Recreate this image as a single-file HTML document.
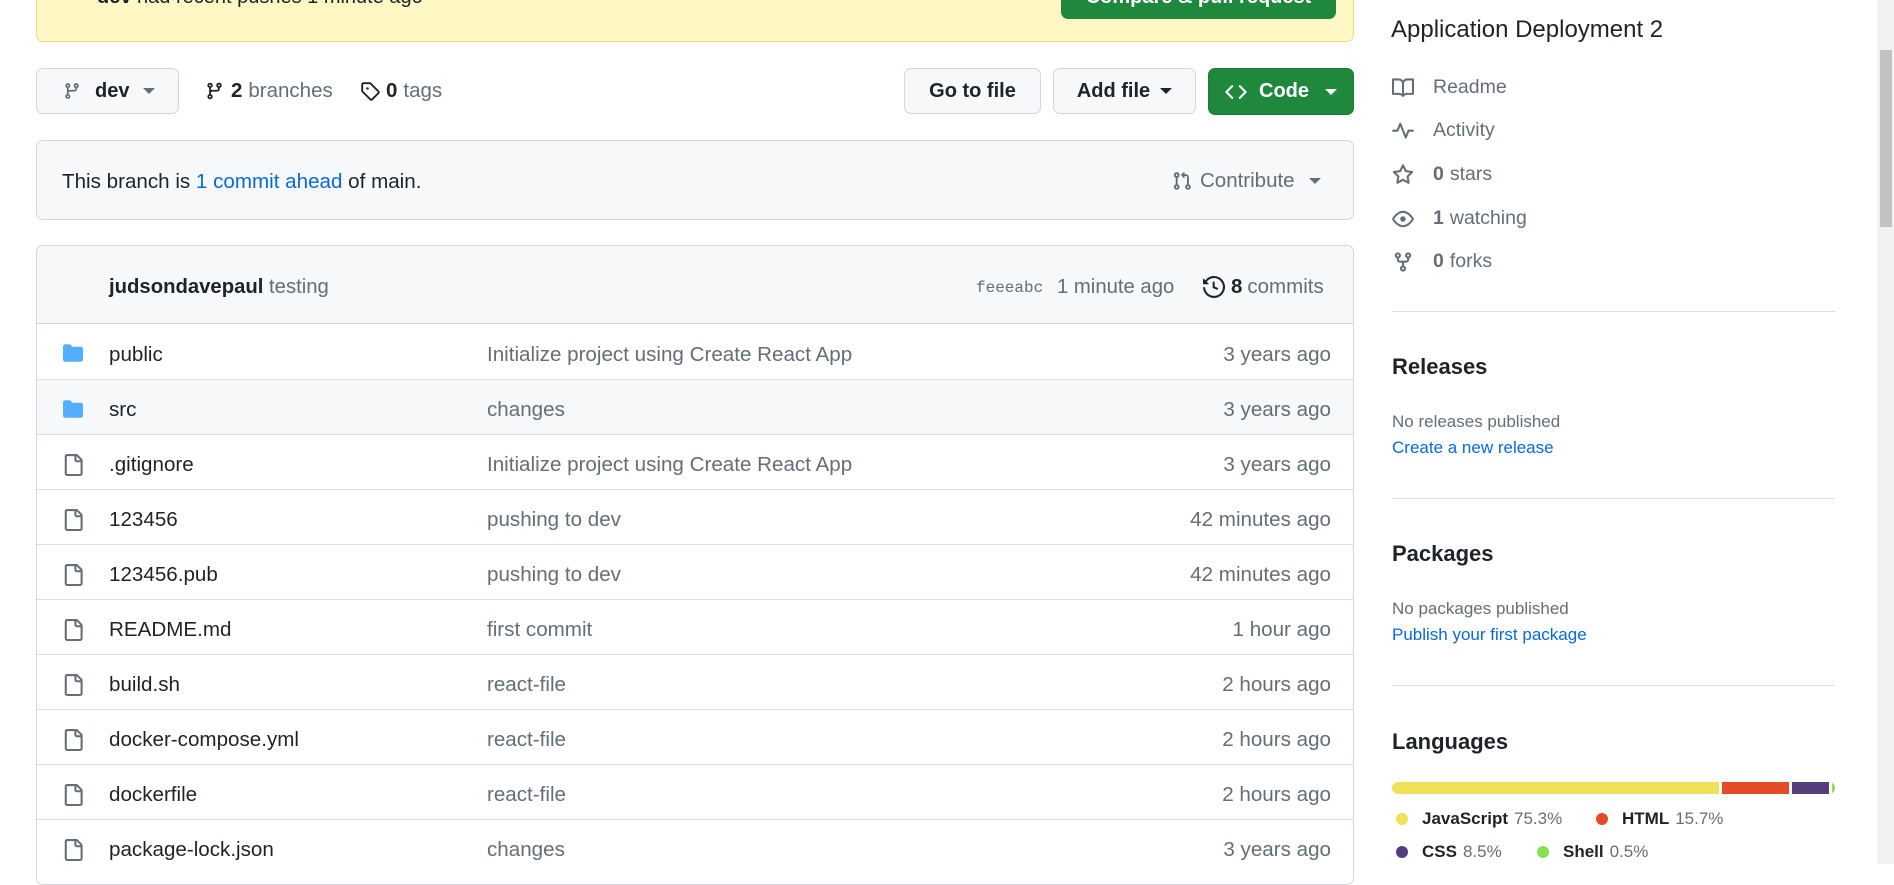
<!DOCTYPE html>
<html><head><meta charset="utf-8"><style>
*{box-sizing:border-box;margin:0;padding:0}
body{width:1894px;height:864px;overflow:hidden;background:#fff;font-family:"Liberation Sans",sans-serif;color:#1f2328;position:relative}
.a{position:absolute}
.btn{position:absolute;border:1px solid #d0d7de;background:#f6f8fa;border-radius:7px;display:flex;align-items:center;justify-content:center;font-size:20px;font-weight:bold;color:#1f2328}
.caret{display:inline-block;width:0;height:0;border-left:6px solid transparent;border-right:6px solid transparent;border-top:6px solid currentColor;margin-left:10px}
.row{position:absolute;left:37px;width:1316px;height:55px;border-top:1px solid #d8dee4;font-size:20.6px}
.row span{position:absolute;top:50%;transform:translateY(-50%);margin-top:3px}
.row .n{left:72px;color:#1f2328}.row .m{left:450px;color:#656d76}.row .t{right:22px;color:#656d76}
.row svg{position:absolute;left:24px;top:19px}
.side{position:absolute;left:1392px;font-size:19.5px;color:#656d76;display:flex;align-items:center}
.side svg{margin-right:19px}
.side b{color:#656d76;margin-right:6px}
.hr{position:absolute;left:1392px;width:443px;height:1px;background:#d8dee4}
h2{position:absolute;left:1392px;font-size:22px;font-weight:bold;color:#1f2328}
.sm{position:absolute;left:1392px;font-size:17px;color:#656d76}
.lnk{color:#0969da}
.lg{position:absolute;font-size:17px;color:#656d76;display:flex;align-items:center}
.lg i{display:inline-block;width:12px;height:12px;border-radius:50%;margin-right:14px}
.lg b{color:#1f2328;margin-right:6px}
</style></head><body>
<div class="a" style="left:36px;top:-10px;width:1318px;height:52px;background:#fff8c5;border:1px solid #eed888;border-radius:7px"></div>
<div class="a" style="left:97px;top:-14px;font-size:20px;color:#1f2328"><b>dev</b> had recent pushes 1 minute ago</div>
<div class="a" style="left:1061px;top:-20px;width:275px;height:39px;background:#1f883d;border-radius:7px;color:#fff;font-weight:bold;font-size:20px;text-align:center;line-height:34px">Compare &amp; pull request</div>

<div class="btn" style="left:36px;top:68px;width:143px;height:46px;justify-content:flex-start;padding-left:26px">
<svg width="18" height="22" viewBox="0 0 16 16" fill="#656d76"><path d="M9.5 3.25a2.25 2.25 0 1 1 3 2.122V6A2.5 2.5 0 0 1 10 8.5H6a1 1 0 0 0-1 1v1.128a2.251 2.251 0 1 1-1.5 0V5.372a2.25 2.25 0 1 1 1.5 0v1.836A2.493 2.493 0 0 1 6 7h4a1 1 0 0 0 1-1v-.628A2.25 2.25 0 0 1 9.5 3.25Zm-6 0a.75.75 0 1 0 1.5 0 .75.75 0 0 0-1.5 0Zm8.25-.75a.75.75 0 1 0 0 1.5.75.75 0 0 0 0-1.5ZM4.25 12a.75.75 0 1 0 0 1.5.75.75 0 0 0 0-1.5Z"/></svg>
<span style="margin-left:14px">dev</span><span class="caret" style="color:#656d76;margin-left:14px"></span></div>
<div class="a" style="left:205px;top:79px;font-size:20.5px;color:#656d76;display:flex;align-items:center"><svg width="19" height="22" viewBox="0 0 16 16" fill="#1f2328"><path d="M9.5 3.25a2.25 2.25 0 1 1 3 2.122V6A2.5 2.5 0 0 1 10 8.5H6a1 1 0 0 0-1 1v1.128a2.251 2.251 0 1 1-1.5 0V5.372a2.25 2.25 0 1 1 1.5 0v1.836A2.493 2.493 0 0 1 6 7h4a1 1 0 0 0 1-1v-.628A2.25 2.25 0 0 1 9.5 3.25Zm-6 0a.75.75 0 1 0 1.5 0 .75.75 0 0 0-1.5 0Zm8.25-.75a.75.75 0 1 0 0 1.5.75.75 0 0 0 0-1.5ZM4.25 12a.75.75 0 1 0 0 1.5.75.75 0 0 0 0-1.5Z"/></svg><b style="color:#1f2328;margin:0 6px 0 7px">2</b>branches</div>
<div class="a" style="left:360px;top:79px;font-size:20.5px;color:#656d76;display:flex;align-items:center"><svg width="20" height="22" viewBox="0 0 16 16" fill="#1f2328"><path d="M1 7.775V2.75C1 1.784 1.784 1 2.75 1h5.025c.464 0 .91.184 1.238.513l6.25 6.25a1.75 1.75 0 0 1 0 2.474l-5.026 5.026a1.75 1.75 0 0 1-2.474 0l-6.25-6.25A1.752 1.752 0 0 1 1 7.775Zm1.5 0c0 .066.026.13.073.177l6.25 6.250a.25.25 0 0 0 .354 0l5.025-5.025a.25.25 0 0 0 0-.354l-6.25-6.25a.25.25 0 0 0-.177-.073H2.75a.25.25 0 0 0-.25.25ZM6 5a1 1 0 1 1 0 2 1 1 0 0 1 0-2Z"/></svg><b style="color:#1f2328;margin:0 6px 0 6px">0</b>tags</div>

<div class="btn" style="left:904px;top:68px;width:137px;height:46px">Go to file</div>
<div class="btn" style="left:1053px;top:68px;width:143px;height:46px">Add file<span class="caret"></span></div>
<div class="btn" style="left:1208px;top:68px;width:146px;height:47px;background:#1f883d;border-color:#1a7f37;color:#fff">
<svg width="22" height="22" viewBox="0 0 16 16" fill="#fff"><path d="m11.28 3.22 4.25 4.25a.75.75 0 0 1 0 1.06l-4.25 4.25a.749.749 0 0 1-1.275-.326.749.749 0 0 1 .215-.734L13.940 8l-3.72-3.72a.749.749 0 0 1 .326-1.275.749.749 0 0 1 .734.215Zm-6.56 0a.751.751 0 0 1 1.042.018.751.751 0 0 1 .018 1.042L2.06 8l3.72 3.72a.749.749 0 0 1-.326 1.275.749.749 0 0 1-.734-.215L.47 8.53a.75.75 0 0 1 0-1.06Z"/></svg><span style="margin-left:12px">Code</span><span class="caret" style="margin-left:16px"></span></div>

<div class="a" style="left:36px;top:140px;width:1318px;height:80px;background:#f6f8fa;border:1px solid #d0d7de;border-radius:7px"></div>
<div class="a" style="left:62px;top:170px;font-size:20.6px">This branch is <span class="lnk">1 commit ahead</span> of main.</div>
<div class="a" style="left:1172px;top:169px;font-size:20.5px;color:#656d76;display:flex;align-items:center"><svg width="20" height="22" viewBox="0 0 16 16" fill="#656d76"><path d="M1.5 3.25a2.25 2.25 0 1 1 3 2.122v5.256a2.251 2.251 0 1 1-1.5 0V5.372A2.25 2.25 0 0 1 1.5 3.25Zm5.677-.177L9.573.677A.25.25 0 0 1 10 .854V2.5h1A2.5 2.5 0 0 1 13.5 5v5.628a2.251 2.251 0 1 1-1.5 0V5a1 1 0 0 0-1-1h-1v1.646a.25.25 0 0 1-.427.177L7.177 3.427a.25.25 0 0 1 0-.354ZM3.75 2.5a.75.75 0 1 0 0 1.5.75.75 0 0 0 0-1.5Zm0 9.5a.75.75 0 1 0 0 1.5.75.75 0 0 0 0-1.5Zm8.25.75a.75.75 0 1 0 1.5 0 .75.75 0 0 0-1.5 0Z"/></svg><span style="margin-left:8px">Contribute</span><span class="caret" style="margin-left:14px"></span></div>

<div class="a" style="left:36px;top:245px;width:1318px;height:640px;border:1px solid #d0d7de;border-radius:7px"></div>
<div class="a" style="left:37px;top:246px;width:1316px;height:78px;background:#f6f8fa;border-radius:7px 7px 0 0;border-bottom:1px solid #d0d7de"></div>
<div class="a" style="left:109px;top:276px;font-size:20.3px"><b>judsondavepaul</b> <span style="color:#656d76">testing</span></div>
<div class="a" style="left:976px;top:279px;font-size:16px;color:#656d76;font-family:'Liberation Mono',monospace">feeeabc</div>
<div class="a" style="left:1057px;top:276px;font-size:20.3px;color:#656d76">1 minute ago</div>
<div class="a" style="left:1203px;top:275px;font-size:20.5px;color:#656d76;display:flex;align-items:center"><svg width="22" height="22" viewBox="0 0 16 16" fill="#1f2328"><path d="m.427 1.927 1.215 1.215a8.002 8.002 0 1 1-1.6 5.685.75.75 0 1 1 1.493-.154 6.5 6.5 0 1 0 1.18-4.458l1.358 1.358A.25.25 0 0 1 3.896 6H.25A.25.25 0 0 1 0 5.75V2.104a.25.25 0 0 1 .427-.177ZM7.75 4a.75.75 0 0 1 .75.75v2.992l2.028.812a.75.75 0 0 1-.557 1.392l-2.5-1A.751.751 0 0 1 7 8.25v-3.5A.75.75 0 0 1 7.75 4Z"/></svg><b style="color:#1f2328;margin:0 5px 0 6px">8</b>commits</div>

<div class="row" style="top:324px;border-top:none"><svg width="24" height="20" viewBox="0 0 16 16" fill="#54aeff"><path d="M1.75 1A1.75 1.75 0 0 0 0 2.75v10.5C0 14.216.784 15 1.75 15h12.5A1.75 1.75 0 0 0 16 13.25v-8.5A1.75 1.75 0 0 0 14.25 3H7.5a.25.25 0 0 1-.2-.1l-.9-1.2C6.07 1.26 5.55 1 5 1H1.75Z"/></svg><span class="n">public</span><span class="m">Initialize project using Create React App</span><span class="t">3 years ago</span></div>
<div class="row" style="top:379px;background:#f6f8fa"><svg width="24" height="20" viewBox="0 0 16 16" fill="#54aeff"><path d="M1.75 1A1.75 1.75 0 0 0 0 2.75v10.5C0 14.216.784 15 1.75 15h12.5A1.75 1.75 0 0 0 16 13.25v-8.5A1.75 1.75 0 0 0 14.25 3H7.5a.25.25 0 0 1-.2-.1l-.9-1.2C6.07 1.26 5.55 1 5 1H1.75Z"/></svg><span class="n">src</span><span class="m">changes</span><span class="t">3 years ago</span></div>
<div class="row" style="top:434px"><svg width="24" height="22" viewBox="0 0 16 16" fill="#656d76"><path d="M2 1.75C2 .784 2.784 0 3.75 0h6.586c.464 0 .909.184 1.237.513l2.914 2.914c.329.328.513.773.513 1.237v9.586A1.75 1.75 0 0 1 13.25 16h-9.5A1.75 1.75 0 0 1 2 14.25Zm1.75-.25a.25.25 0 0 0-.25.25v12.5c0 .138.112.25.25.25h9.5a.25.25 0 0 0 .25-.25V6h-2.75A1.75 1.75 0 0 1 9 4.25V1.5Zm6.75.062V4.25c0 .138.112.25.25.25h2.688l-.011-.013-2.914-2.914-.013-.011Z"/></svg><span class="n">.gitignore</span><span class="m">Initialize project using Create React App</span><span class="t">3 years ago</span></div>
<div class="row" style="top:489px"><svg width="24" height="22" viewBox="0 0 16 16" fill="#656d76"><path d="M2 1.75C2 .784 2.784 0 3.75 0h6.586c.464 0 .909.184 1.237.513l2.914 2.914c.329.328.513.773.513 1.237v9.586A1.75 1.75 0 0 1 13.25 16h-9.5A1.75 1.75 0 0 1 2 14.25Zm1.75-.25a.25.25 0 0 0-.25.25v12.5c0 .138.112.25.25.25h9.5a.25.25 0 0 0 .25-.25V6h-2.75A1.75 1.75 0 0 1 9 4.25V1.5Zm6.75.062V4.25c0 .138.112.25.25.25h2.688l-.011-.013-2.914-2.914-.013-.011Z"/></svg><span class="n">123456</span><span class="m">pushing to dev</span><span class="t">42 minutes ago</span></div>
<div class="row" style="top:544px"><svg width="24" height="22" viewBox="0 0 16 16" fill="#656d76"><path d="M2 1.75C2 .784 2.784 0 3.75 0h6.586c.464 0 .909.184 1.237.513l2.914 2.914c.329.328.513.773.513 1.237v9.586A1.75 1.75 0 0 1 13.25 16h-9.5A1.75 1.75 0 0 1 2 14.25Zm1.75-.25a.25.25 0 0 0-.25.25v12.5c0 .138.112.25.25.25h9.5a.25.25 0 0 0 .25-.25V6h-2.75A1.75 1.75 0 0 1 9 4.25V1.5Zm6.75.062V4.25c0 .138.112.25.25.25h2.688l-.011-.013-2.914-2.914-.013-.011Z"/></svg><span class="n">123456.pub</span><span class="m">pushing to dev</span><span class="t">42 minutes ago</span></div>
<div class="row" style="top:599px"><svg width="24" height="22" viewBox="0 0 16 16" fill="#656d76"><path d="M2 1.75C2 .784 2.784 0 3.75 0h6.586c.464 0 .909.184 1.237.513l2.914 2.914c.329.328.513.773.513 1.237v9.586A1.75 1.75 0 0 1 13.25 16h-9.5A1.75 1.75 0 0 1 2 14.25Zm1.75-.25a.25.25 0 0 0-.25.25v12.5c0 .138.112.25.25.25h9.5a.25.25 0 0 0 .25-.25V6h-2.75A1.75 1.75 0 0 1 9 4.25V1.5Zm6.75.062V4.25c0 .138.112.25.25.25h2.688l-.011-.013-2.914-2.914-.013-.011Z"/></svg><span class="n">README.md</span><span class="m">first commit</span><span class="t">1 hour ago</span></div>
<div class="row" style="top:654px"><svg width="24" height="22" viewBox="0 0 16 16" fill="#656d76"><path d="M2 1.75C2 .784 2.784 0 3.75 0h6.586c.464 0 .909.184 1.237.513l2.914 2.914c.329.328.513.773.513 1.237v9.586A1.75 1.75 0 0 1 13.25 16h-9.5A1.75 1.75 0 0 1 2 14.25Zm1.75-.25a.25.25 0 0 0-.25.25v12.5c0 .138.112.25.25.25h9.5a.25.25 0 0 0 .25-.25V6h-2.75A1.75 1.75 0 0 1 9 4.25V1.5Zm6.75.062V4.25c0 .138.112.25.25.25h2.688l-.011-.013-2.914-2.914-.013-.011Z"/></svg><span class="n">build.sh</span><span class="m">react-file</span><span class="t">2 hours ago</span></div>
<div class="row" style="top:709px"><svg width="24" height="22" viewBox="0 0 16 16" fill="#656d76"><path d="M2 1.75C2 .784 2.784 0 3.75 0h6.586c.464 0 .909.184 1.237.513l2.914 2.914c.329.328.513.773.513 1.237v9.586A1.75 1.75 0 0 1 13.25 16h-9.5A1.75 1.75 0 0 1 2 14.25Zm1.75-.25a.25.25 0 0 0-.25.25v12.5c0 .138.112.25.25.25h9.5a.25.25 0 0 0 .25-.25V6h-2.75A1.75 1.75 0 0 1 9 4.25V1.5Zm6.75.062V4.25c0 .138.112.25.25.25h2.688l-.011-.013-2.914-2.914-.013-.011Z"/></svg><span class="n">docker-compose.yml</span><span class="m">react-file</span><span class="t">2 hours ago</span></div>
<div class="row" style="top:764px"><svg width="24" height="22" viewBox="0 0 16 16" fill="#656d76"><path d="M2 1.75C2 .784 2.784 0 3.75 0h6.586c.464 0 .909.184 1.237.513l2.914 2.914c.329.328.513.773.513 1.237v9.586A1.75 1.75 0 0 1 13.25 16h-9.5A1.75 1.75 0 0 1 2 14.25Zm1.75-.25a.25.25 0 0 0-.25.25v12.5c0 .138.112.25.25.25h9.5a.25.25 0 0 0 .25-.25V6h-2.75A1.75 1.75 0 0 1 9 4.25V1.5Zm6.75.062V4.25c0 .138.112.25.25.25h2.688l-.011-.013-2.914-2.914-.013-.011Z"/></svg><span class="n">dockerfile</span><span class="m">react-file</span><span class="t">2 hours ago</span></div>
<div class="row" style="top:819px"><svg width="24" height="22" viewBox="0 0 16 16" fill="#656d76"><path d="M2 1.75C2 .784 2.784 0 3.75 0h6.586c.464 0 .909.184 1.237.513l2.914 2.914c.329.328.513.773.513 1.237v9.586A1.75 1.75 0 0 1 13.25 16h-9.5A1.75 1.75 0 0 1 2 14.25Zm1.75-.25a.25.25 0 0 0-.25.25v12.5c0 .138.112.25.25.25h9.5a.25.25 0 0 0 .25-.25V6h-2.75A1.75 1.75 0 0 1 9 4.25V1.5Zm6.75.062V4.25c0 .138.112.25.25.25h2.688l-.011-.013-2.914-2.914-.013-.011Z"/></svg><span class="n">package-lock.json</span><span class="m">changes</span><span class="t">3 years ago</span></div>

<div class="a" style="left:1391px;top:16px;font-size:24px;color:#1f2328">Application Deployment 2</div>
<div class="side" style="top:76px"><svg width="22" height="22" viewBox="0 0 16 16" fill="#656d76"><path d="M0 1.75A.75.75 0 0 1 .75 1h4.253c1.227 0 2.317.59 3 1.501A3.743 3.743 0 0 1 11.006 1h4.245a.75.75 0 0 1 .75.75v10.5a.75.75 0 0 1-.75.75h-4.507a2.25 2.25 0 0 0-1.591.659l-.622.621a.75.75 0 0 1-1.06 0l-.622-.621A2.25 2.25 0 0 0 5.258 13H.75a.75.75 0 0 1-.75-.75Zm7.251 10.324.004-5.073-.002-2.253A2.25 2.25 0 0 0 5.003 2.5H1.5v9h3.757a3.75 3.75 0 0 1 1.994.574ZM8.755 4.75l-.004 7.322a3.752 3.752 0 0 1 1.992-.572H14.5v-9h-3.495a2.25 2.25 0 0 0-2.25 2.25Z"/></svg>Readme</div>
<div class="side" style="top:119px"><svg width="22" height="22" viewBox="0 0 16 16" fill="#656d76"><path d="M6 2c.306 0 .582.187.696.471L10 10.731l1.304-3.26A.751.751 0 0 1 12 7h3.25a.75.75 0 0 1 0 1.5h-2.742l-1.812 4.528a.751.751 0 0 1-1.392 0L6 4.77 4.696 8.03A.75.75 0 0 1 4 8.5H.75a.75.75 0 0 1 0-1.5h2.742l1.812-4.529A.751.751 0 0 1 6 2Z"/></svg>Activity</div>
<div class="side" style="top:163px"><svg width="22" height="22" viewBox="0 0 16 16" fill="#656d76"><path d="M8 .25a.75.75 0 0 1 .673.418l1.882 3.815 4.21.612a.75.75 0 0 1 .416 1.279l-3.046 2.970.719 4.192a.751.751 0 0 1-1.088.791L8 12.347l-3.766 1.98a.75.75 0 0 1-1.088-.79l.72-4.194L.818 6.374a.75.75 0 0 1 .416-1.28l4.21-.611L7.327.668A.75.75 0 0 1 8 .25Zm0 2.445L6.615 5.5a.75.75 0 0 1-.564.41l-3.097.45 2.24 2.184a.75.75 0 0 1 .216.664l-.528 3.084 2.769-1.456a.75.75 0 0 1 .698 0l2.77 1.456-.53-3.084a.75.75 0 0 1 .216-.664l2.24-2.183-3.096-.45a.75.75 0 0 1-.564-.41L8 2.694Z"/></svg><b>0</b>stars</div>
<div class="side" style="top:207px"><svg width="22" height="22" viewBox="0 0 16 16" fill="#656d76"><path d="M8 2c1.981 0 3.671.992 4.933 2.078 1.27 1.091 2.187 2.345 2.637 3.023a1.62 1.62 0 0 1 0 1.798c-.45.678-1.367 1.932-2.637 3.023C11.67 13.008 9.981 14 8 14c-1.981 0-3.671-.992-4.933-2.078C1.797 10.83.88 9.576.43 8.898a1.62 1.62 0 0 1 0-1.798c.45-.677 1.367-1.931 2.637-3.022C4.33 2.992 6.019 2 8 2ZM1.679 7.932a.12.12 0 0 0 0 .136c.411.622 1.241 1.75 2.366 2.717C5.176 11.758 6.527 12.5 8 12.5c1.473 0 2.825-.742 3.955-1.715 1.124-.967 1.954-2.096 2.366-2.717a.12.12 0 0 0 0-.136c-.412-.621-1.242-1.750-2.366-2.717C10.824 4.242 9.473 3.5 8 3.5c-1.473 0-2.825.742-3.955 1.715-1.124.967-1.954 2.096-2.366 2.717ZM8 10a2 2 0 1 1-.001-3.999A2 2 0 0 1 8 10Z"/></svg><b>1</b>watching</div>
<div class="side" style="top:250px"><svg width="22" height="22" viewBox="0 0 16 16" fill="#656d76"><path d="M5 5.372v.878c0 .414.336.75.75.75h4.5a.75.75 0 0 0 .75-.75v-.878a2.25 2.25 0 1 1 1.5 0v.878a2.25 2.25 0 0 1-2.25 2.25h-1.5v2.128a2.251 2.251 0 1 1-1.5 0V8.5h-1.5A2.25 2.25 0 0 1 3.5 6.25v-.878a2.25 2.25 0 1 1 1.5 0ZM5 3.25a.75.75 0 1 0-1.5 0 .75.75 0 0 0 1.5 0Zm6.75.75a.75.75 0 1 0 0-1.5.75.75 0 0 0 0 1.5Zm-3 8.75a.75.75 0 1 0-1.5 0 .75.75 0 0 0 1.5 0Z"/></svg><b>0</b>forks</div>
<div class="hr" style="top:311px"></div>
<h2 style="top:354px">Releases</h2>
<div class="sm" style="top:412px">No releases published</div>
<div class="sm lnk" style="top:438px">Create a new release</div>
<div class="hr" style="top:498px"></div>
<h2 style="top:541px">Packages</h2>
<div class="sm" style="top:599px">No packages published</div>
<div class="sm lnk" style="top:625px">Publish your first package</div>
<div class="hr" style="top:685px"></div>
<h2 style="top:729px">Languages</h2>
<div class="a" style="left:1392px;top:782px;width:443px;height:12px;border-radius:6px;overflow:hidden;display:flex">
<div style="width:327px;background:#f1e05a"></div><div style="width:3px"></div><div style="width:67px;background:#e34c26"></div><div style="width:3px"></div><div style="width:37px;background:#563d7c"></div><div style="width:3px"></div><div style="width:3px;background:#89e051"></div></div>
<div class="lg" style="left:1396px;top:809px"><i style="background:#f1e05a"></i><b>JavaScript</b>75.3%</div>
<div class="lg" style="left:1596px;top:809px"><i style="background:#e34c26"></i><b>HTML</b>15.7%</div>
<div class="lg" style="left:1396px;top:842px"><i style="background:#563d7c"></i><b>CSS</b>8.5%</div>
<div class="lg" style="left:1537px;top:842px"><i style="background:#89e051"></i><b>Shell</b>0.5%</div>

<div class="a" style="left:1877px;top:0;width:17px;height:864px;background:#f1f1f1"></div>
<div class="a" style="left:1880px;top:50px;width:12px;height:177px;background:#c1c1c1"></div>
</body></html>
